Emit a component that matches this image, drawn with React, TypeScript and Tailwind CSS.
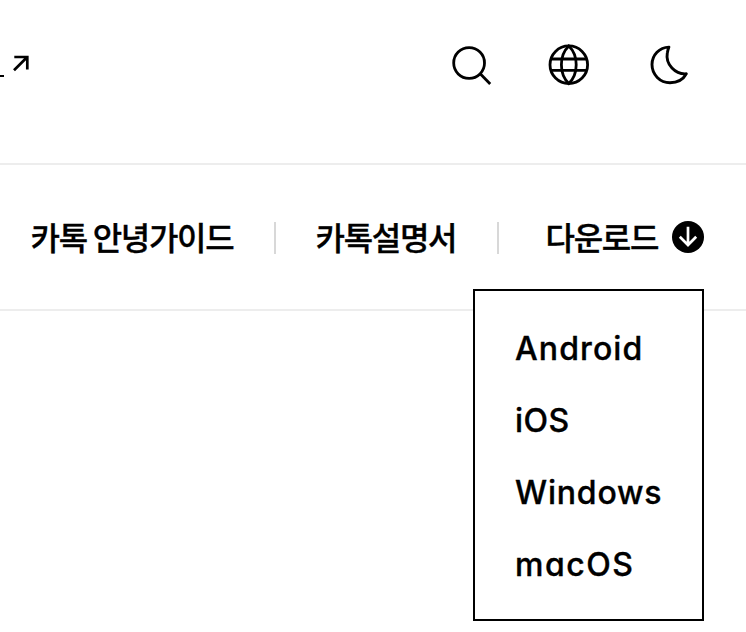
import { useState } from "react";
import type { ReactNode } from "react";

const platforms = [
  { name: "Android", tracking: "tracking-[1.1px]" },
  { name: "iOS", tracking: "tracking-[0.4px]" },
  { name: "Windows", tracking: "tracking-[0.8px]" },
  { name: "macOS", tracking: "tracking-[1.5px]" },
];

function ExternalArrow() {
  return (
    <svg
      width="18"
      height="18"
      viewBox="0 0 18 18"
      fill="none"
      stroke="currentColor"
      strokeWidth="2.7"
      aria-hidden="true"
    >
      <path d="M2.3 3H15.3V15.4M15 3.3L2 16.3" />
    </svg>
  );
}

function SearchIcon() {
  return (
    <svg
      width="48"
      height="48"
      viewBox="0 0 48 48"
      fill="none"
      stroke="currentColor"
      strokeWidth="2.8"
      aria-hidden="true"
    >
      <circle cx="22.1" cy="22" r="15.4" />
      <path d="M33 32.6L43.2 43" />
    </svg>
  );
}

function GlobeIcon() {
  return (
    <svg
      width="48"
      height="48"
      viewBox="0 0 48 48"
      fill="none"
      stroke="currentColor"
      strokeWidth="2.8"
      aria-hidden="true"
    >
      <circle cx="23.8" cy="23.7" r="18.8" />
      <path d="M6 18H41.6M6 29.4H41.6" />
      <path d="M23.8 4.9C19 9.5 16.4 16 16.4 23.7S19 37.9 23.8 42.5C28.6 37.9 31.2 31.4 31.2 23.7S28.6 9.5 23.8 4.9Z" />
    </svg>
  );
}

function MoonIcon() {
  return (
    <svg
      width="48"
      height="48"
      viewBox="0 0 48 48"
      fill="none"
      stroke="currentColor"
      strokeWidth="2.9"
      strokeLinejoin="round"
      aria-hidden="true"
    >
      <path d="M23.9 6.1C14.6 6.3 7 14 7 23.6C7 33.6 15 41.7 25 41.7C32.3 41.7 38.4 38.2 41.3 32.8C30.4 33.6 20.3 23.5 22.3 12C22.6 10 23.1 8 23.9 6.1Z" />
    </svg>
  );
}

function DownloadIcon() {
  return (
    <svg width="32" height="32" viewBox="0 0 32 32" fill="none" aria-hidden="true">
      <circle cx="16" cy="16" r="16" fill="#000" />
      <path d="M16 5.8V24M7.8 15.8L16 24L24.2 15.8" stroke="#fff" strokeWidth="2.7" />
    </svg>
  );
}

function IconButton({ label, children }: { label: string; children: ReactNode }) {
  return (
    <button type="button" aria-label={label} className="flex size-12">
      {children}
    </button>
  );
}

function Divider() {
  return <span className="mt-0.5 ml-10 h-8 w-0.5 shrink-0 bg-[#d8d8d8]" />;
}

export default function App() {
  const [open, setOpen] = useState(true);

  return (
    <div className="h-[632px] w-[746px] overflow-hidden bg-white font-['Noto_Sans_CJK_KR',sans-serif] text-black">
      <header className="flex h-[163px] items-start justify-between pt-[41px] pr-[53px]">
        <a href="#" className="flex pt-[13px]">
          <span className="mt-[21px] h-0.5 w-[3.5px] bg-black" />
          <span className="ml-[8.5px]">
            <ExternalArrow />
          </span>
        </a>
        <div className="flex">
          <IconButton label="검색">
            <SearchIcon />
          </IconButton>
          <div className="ml-[50px] flex gap-[52px]">
            <IconButton label="언어">
              <GlobeIcon />
            </IconButton>
            <IconButton label="다크 모드">
              <MoonIcon />
            </IconButton>
          </div>
        </div>
      </header>

      <nav className="flex h-[148px] items-center border-y-2 border-[#ededed] pl-[30.5px] text-[32px] leading-[48px] font-medium tracking-[-1.3px] whitespace-nowrap [-webkit-text-stroke:0.35px_#000]">
        <a href="#" className="w-[203.5px] pb-0.5">
          카톡 안녕가이드
        </a>
        <Divider />
        <a href="#" className="ml-[39.5px] w-[141.5px] pb-0.5">
          카톡설명서
        </a>
        <Divider />
        <div className="relative ml-[46px]">
          <button
            type="button"
            className="flex w-[159px] items-center justify-between pl-[0.5px]"
            onClick={() => setOpen(!open)}
          >
            <span className="pb-0.5 tracking-[-1.3px]">다운로드</span>
            <DownloadIcon />
          </button>
          {open && (
            <ul className="absolute top-[77px] right-0 flex h-[332px] w-[231px] flex-col gap-6 border-2 border-black bg-white pt-[34px] pl-[40px] font-['Inter','Noto_Sans_CJK_KR',sans-serif] [font-feature-settings:'cv11']">
              {platforms.map(({ name, tracking }) => (
                <li key={name} className={tracking}>
                  <a href="#">{name}</a>
                </li>
              ))}
            </ul>
          )}
        </div>
      </nav>
    </div>
  );
}
